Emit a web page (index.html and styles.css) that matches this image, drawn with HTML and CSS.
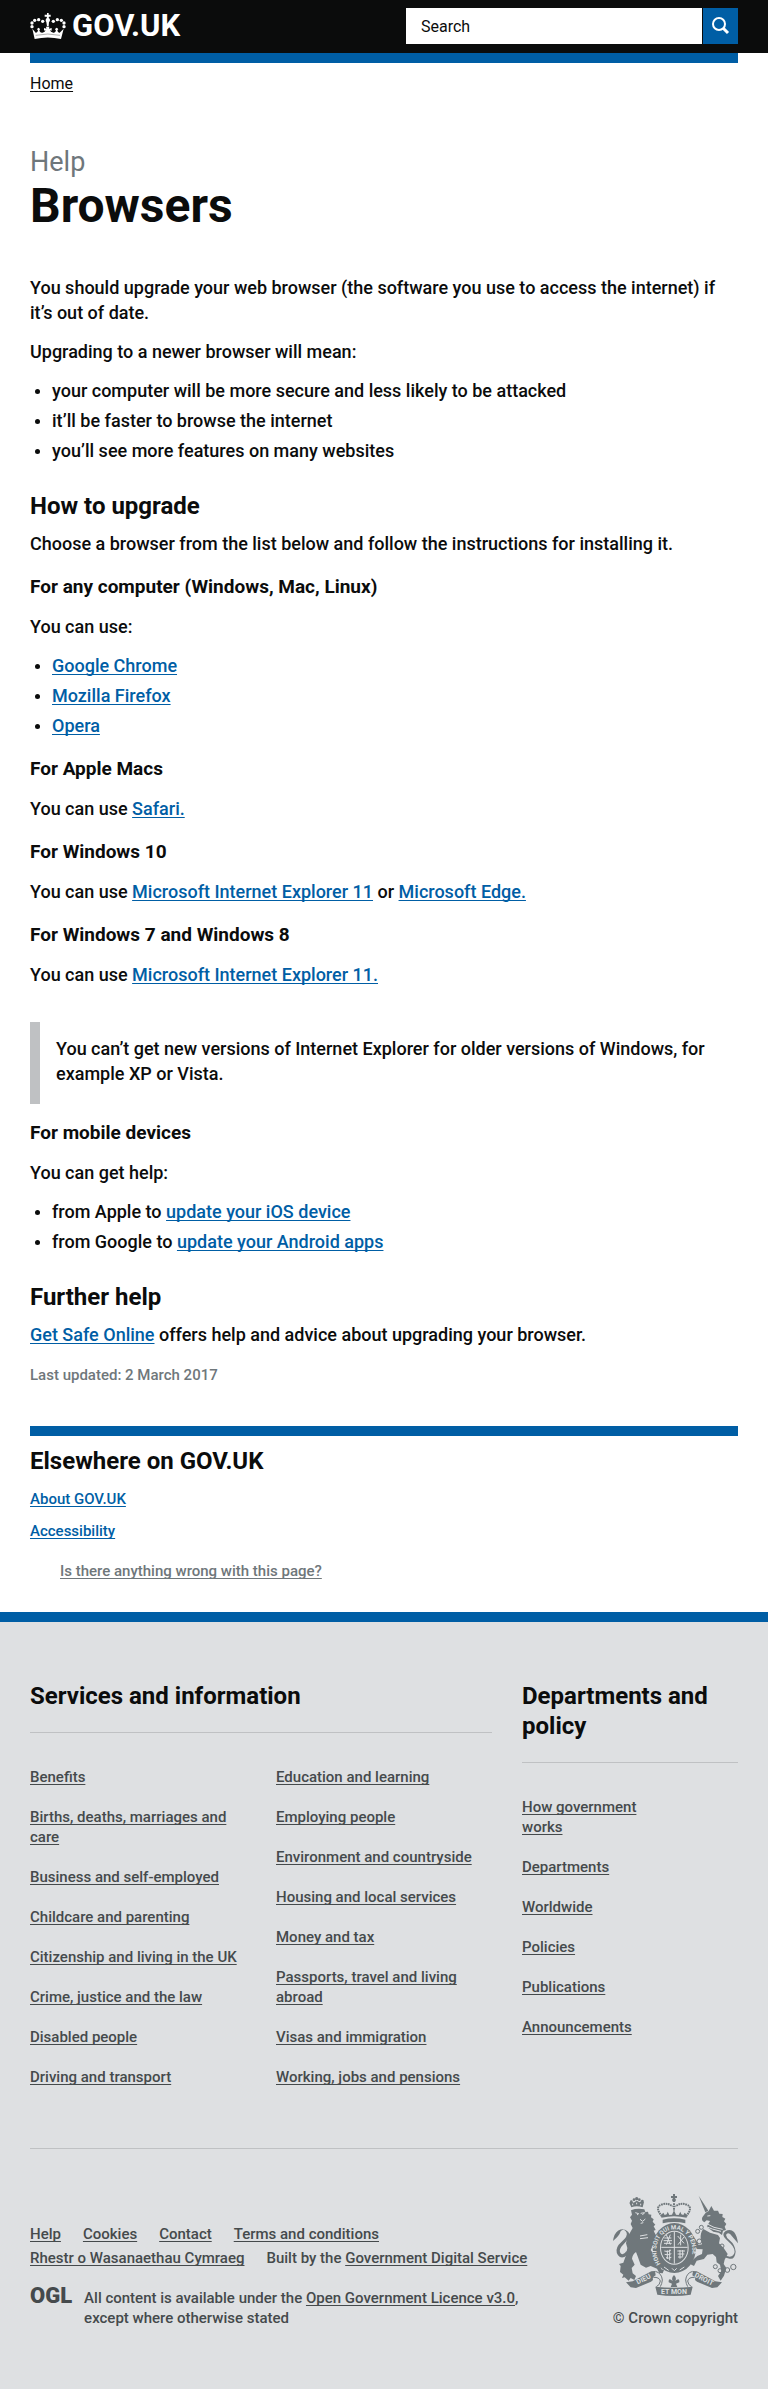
FILE: index.html
```html
<!DOCTYPE html>
<html lang="en">
<head>
<meta charset="utf-8">
<meta name="viewport" content="width=device-width, initial-scale=1">
<title>Browsers - Help - GOV.UK</title>
<link rel="stylesheet" href="styles.css">
</head>
<body>
<header class="site-header">
  <div class="container site-header-inner">
    <a class="logo" href="#">
      <svg class="crown" viewBox="32 36 106 78" aria-hidden="true">
        <path d="M38 83 L48 95 Q54 96 55 88 L52 85 Q57 76 61 85 L59 89 Q62 96 68 95 Q77 94 77 87 L73 89 V81 L80 83 L79 77 H89 L88 83 L96 81 V89 L91 87 Q92 94 101 95 Q106 96 109 89 L106 85 Q111 76 116 85 L113 88 Q114 96 120 95 L132 83 L124 114 Q84 105 45 114 Z"/>
        <path d="M82 36 H87 V41 H93 V47 H88 L87 51 Q91 52 91 57 Q91 61 88 63 L87 76 H82 L80 63 Q78 61 78 57 Q78 52 82 51 L81 47 H75 V41 H82 Z"/>
        <circle cx="37" cy="77" r="5"/><circle cx="37" cy="66" r="5"/><circle cx="45" cy="58" r="5"/><circle cx="57" cy="56" r="5"/><circle cx="69" cy="61" r="5"/>
        <circle cx="133" cy="77" r="5"/><circle cx="133" cy="66" r="5"/><circle cx="125" cy="58" r="5"/><circle cx="113" cy="56" r="5"/><circle cx="101" cy="61" r="5"/>
        <path class="gap" d="M48 103 Q84 95 121 103"/>
      </svg>
      <span>GOV.UK</span>
    </a>
    <form class="search" role="search">
      <input type="search" id="site-search" aria-label="Search" placeholder="Search">
      <button type="submit" aria-label="Search GOV.UK">
        <svg viewBox="0 0 18 18" aria-hidden="true"><circle cx="7" cy="7" r="6"/><path d="M11 11 L16 16"/></svg>
      </button>
    </form>
  </div>
</header>
<div class="container">
  <nav class="breadcrumb" aria-label="Breadcrumb"><a href="#">Home</a></nav>
  <main>
    <header class="page-title">
      <p>Help</p>
      <h1>Browsers</h1>
    </header>
    <article class="content">
      <p>You should upgrade your web browser (the software you use to access the internet) if it’s out of date.</p>
      <p>Upgrading to a newer browser will mean:</p>
      <ul>
        <li>your computer will be more secure and less likely to be attacked</li>
        <li>it’ll be faster to browse the internet</li>
        <li>you’ll see more features on many websites</li>
      </ul>
      <h2>How to upgrade</h2>
      <p>Choose a browser from the list below and follow the instructions for installing it.</p>
      <h3>For any computer (Windows, Mac, Linux)</h3>
      <p>You can use:</p>
      <ul>
        <li><a href="#">Google Chrome</a></li>
        <li><a href="#">Mozilla Firefox</a></li>
        <li><a href="#">Opera</a></li>
      </ul>
      <h3>For Apple Macs</h3>
      <p>You can use <a href="#">Safari.</a></p>
      <h3>For Windows 10</h3>
      <p>You can use <a href="#">Microsoft Internet Explorer 11</a> or <a href="#">Microsoft Edge.</a></p>
      <h3>For Windows 7 and Windows 8</h3>
      <p>You can use <a href="#">Microsoft Internet Explorer 11.</a></p>
      <div class="callout"><p>You can’t get new versions of Internet Explorer for older versions of Windows, for example XP or Vista.</p></div>
      <h3>For mobile devices</h3>
      <p>You can get help:</p>
      <ul>
        <li>from Apple to <a href="#">update your iOS device</a></li>
        <li>from Google to <a href="#">update your Android apps</a></li>
      </ul>
      <h2>Further help</h2>
      <p><a href="#">Get Safe Online</a> offers help and advice about upgrading your browser.</p>
      <p class="updated">Last updated: 2 March 2017</p>
    </article>
  </main>
  <aside class="related">
    <h2>Elsewhere on GOV.UK</h2>
    <ul>
      <li><a href="#">About GOV.UK</a></li>
      <li><a href="#">Accessibility</a></li>
    </ul>
  </aside>
  <p class="report"><a href="#">Is there anything wrong with this page?</a></p>
</div>
<footer class="site-footer">
  <div class="container">
    <div class="footer-nav">
      <section>
        <h2>Services and information</h2>
        <ul class="two-columns">
          <li><a href="#">Benefits</a></li>
          <li><a href="#">Births, deaths, marriages and care</a></li>
          <li><a href="#">Business and self-employed</a></li>
          <li><a href="#">Childcare and parenting</a></li>
          <li><a href="#">Citizenship and living in the UK</a></li>
          <li><a href="#">Crime, justice and the law</a></li>
          <li><a href="#">Disabled people</a></li>
          <li><a href="#">Driving and transport</a></li>
          <li><a href="#">Education and learning</a></li>
          <li><a href="#">Employing people</a></li>
          <li><a href="#">Environment and countryside</a></li>
          <li><a href="#">Housing and local services</a></li>
          <li><a href="#">Money and tax</a></li>
          <li><a href="#">Passports, travel and living abroad</a></li>
          <li><a href="#">Visas and immigration</a></li>
          <li><a href="#">Working, jobs and pensions</a></li>
        </ul>
      </section>
      <section>
        <h2>Departments and policy</h2>
        <ul class="narrow">
          <li><a href="#">How government works</a></li>
          <li><a href="#">Departments</a></li>
          <li><a href="#">Worldwide</a></li>
          <li><a href="#">Policies</a></li>
          <li><a href="#">Publications</a></li>
          <li><a href="#">Announcements</a></li>
        </ul>
      </section>
    </div>
    <div class="footer-meta">
      <div class="meta-text">
        <ul class="meta-links">
          <li><a href="#">Help</a></li>
          <li><a href="#">Cookies</a></li>
          <li><a href="#">Contact</a></li>
          <li><a href="#">Terms and conditions</a></li>
          <li><a href="#">Rhestr o Wasanaethau Cymraeg</a></li>
          <li>Built by the <a href="#">Government Digital Service</a></li>
        </ul>
        <div class="licence">
          <span class="ogl">OGL</span>
          <p>All content is available under the <a href="#">Open Government Licence v3.0</a>, except where otherwise stated</p>
        </div>
      </div>
      <a class="copyright" href="#">
        <svg class="arms" viewBox="39 42 375 306" aria-hidden="true">
          <!-- lion -->
          <path d="M93 91 Q110 84 133 88 L136 96 L144 95 L146 103 L154 104 L153 112 L161 118 L158 125 L166 134 L161 139 L167 150 L161 152 L166 163 L174 170 L170 177 L179 179 L176 186 L184 190 L180 198 L170 194 L168 204 L158 198 L152 210 L164 226 L165 240 L178 246 L184 268 L192 270 L188 280 L178 279 L171 266 L152 258 L138 263 L122 254 L114 232 L108 216 Q98 222 96 236 L104 254 L95 264 L98 280 L108 288 L103 300 L92 294 L86 302 L74 292 L66 294 L70 284 L60 276 L62 258 L57 252 L70 248 L78 226 L82 204 L78 190 L82 172 L90 158 L98 144 L92 132 L96 122 L90 112 L96 104 Z"/>
          <path d="M82 224 Q66 240 54 226 Q44 210 56 194 L74 176 Q86 162 76 152 Q68 146 62 154 Q58 168 39 183 Q42 160 54 152 Q72 142 85 156 Q94 168 80 182 L64 200 Q56 212 62 220 Q70 228 80 212 Z"/>
          <path d="M94 82 L88 68 Q94 62 101 68 L110 62 L119 67 Q127 60 132 66 L128 82 Q110 76 94 82 Z"/>
          <circle cx="94" cy="65" r="4"/><circle cx="102" cy="59" r="4"/><circle cx="110" cy="56" r="5"/><circle cx="118" cy="59" r="4"/><circle cx="127" cy="63" r="4"/>
          <path class="cut" d="M106 98 L116 101 L111 105 M122 100 L134 98 L127 105 M120 118 L128 124 L136 117 M122 130 L130 128 M98 71 V76 M110 68 V73 M122 71 V76 M120 168 L142 164 M120 176 L144 173"/>
          <!-- unicorn -->
          <path d="M296 47 L325 92 L316 97 Z"/>
          <path d="M307 112 L317 98 L326 93 L334 78 L342 92 L354 92 L358 101 L368 102 L367 111 L376 116 L372 124 L379 132 L374 140 L378 150 L369 152 L366 165 L356 158 L340 155 L320 140 L330 123 L320 121 L313 127 Q303 122 307 112 Z"/>
          <path d="M310 147 L330 158 L354 165 L360 174 L357 190 L371 204 L383 222 L374 239 L371 252 L379 264 L372 287 L362 302 L354 288 L364 274 L360 254 L350 247 L348 231 L338 222 L322 224 L312 237 L290 242 L282 258 L270 252 L278 240 L292 228 L306 222 L308 208 L289 207 L280 193 L276 181 L270 172 L280 168 L288 180 L296 195 L306 193 L302 178 Q300 158 310 147 Z"/>
          <path d="M372 222 Q392 239 402 222 Q408 207 392 191 L378 178 Q363 164 376 154 Q391 145 402 156 Q411 167 414 190 Q400 174 391 163 Q382 156 378 165 Q379 173 389 181 Q405 194 407 215 Q404 240 389 236 Q378 234 368 228 Z"/>
          <path class="cut" d="M322 108 L331 107 M316 139 L337 147 L363 154 M322 132 L342 142 L368 148"/>
          <g class="line"><circle cx="346" cy="260" r="6"/><circle cx="360" cy="272" r="6"/><circle cx="382" cy="270" r="7"/><circle cx="400" cy="261" r="8"/><circle cx="366" cy="198" r="6"/><circle cx="298" cy="184" r="7"/><circle cx="293" cy="154" r="6"/><circle cx="304" cy="142" r="6"/></g>
          <!-- crown -->
          <path d="M219 42 H225 V48 H231 V54 H225 L228 60 L225 66 H219 L216 60 L219 54 H213 V48 H219 Z"/>
          <path d="M184 104 L190 98 L194 105 L200 103 L203 95 L208 105 L216 104 L222 91 L228 104 L236 105 L241 95 L244 103 L250 105 L254 98 L260 104 V113 Q222 104 184 113 Z"/>
          <path d="M188 119 Q222 111 256 119 V130 Q222 122 188 130 Z"/>
          <g class="beads"><path d="M186 109 Q163 82 184 74 Q202 67 218 79 M258 109 Q281 82 260 74 Q242 67 226 79 M222 70 V92"/></g>
          <!-- garter and shield -->
          <ellipse cx="223" cy="204" rx="65" ry="75"/>
          <ellipse class="ground" cx="223" cy="203" rx="43" ry="51"/>
          <ellipse cx="223" cy="203" rx="40" ry="48"/>
          <path class="cut" d="M223 155 V251 M184 202 H263"/>
          <path class="cut" d="M193 174 H214 M191 182 H216 M192 190 H215 M199 164 L211 194 M211 164 L199 194 M233 168 L252 190 M252 171 L234 194 M242 164 V196 M193 213 Q204 218 213 210 M194 223 Q204 227 214 221 M198 233 Q206 236 214 232 M202 211 V237 M209 209 V241 M232 213 H255 M233 222 H253 M234 231 H248 M240 210 V236 M248 210 V230"/>
          <path id="garter" class="hidden" d="M187 258 A54 63 0 1 1 259 258"/>
          <text class="motto"><textPath href="#garter" startOffset="8">HONI SOIT QUI MAL Y PENSE</textPath></text>
          <path class="cut" d="M192 261 L206 271 M216 265 L223 272 L230 265 M239 270 L253 261"/>
          <!-- scroll -->
          <path d="M78 307 L98 304 L154 274 L165 273 L167 286 Q156 291 159 300 L153 305 L108 324 L92 322 Z"/>
          <path d="M366 307 L346 304 L290 274 L279 273 L277 286 Q288 291 285 300 L291 305 L336 324 L352 322 Z"/>
          <path d="M166 320 Q222 326 278 320 L272 344 Q222 352 172 344 Z"/>
          <path class="line" d="M160 292 Q178 291 181 303 Q180 315 169 320 M284 292 Q266 291 263 303 Q264 315 275 320 M166 274 Q185 279 187 300 Q186 311 181 320 M278 274 Q259 279 257 300 Q258 311 263 320"/>
          <path d="M222 285 Q231 294 226 303 Q239 291 238 307 L228 311 L232 321 H212 L216 311 L206 307 Q205 291 218 303 Q213 294 222 285 Z"/>
          <text class="scroll" x="132" y="304" transform="rotate(-27 132 300)">DIEU</text>
          <text class="scroll" x="222" y="342">ET MON</text>
          <text class="scroll" x="311" y="304" transform="rotate(27 311 300)">DROIT</text>
        </svg>
        <span>© Crown copyright</span>
      </a>
    </div>
  </div>
</footer>
</body>
</html>
```
FILE: styles.css
```css
* { box-sizing: border-box; }
body, h1, h2, h3, p, ul { margin: 0; padding: 0; }
body {
  background: #fff;
  color: #0b0c0c;
  font-family: Roboto, "Liberation Sans", sans-serif;
  font-size: 18px;
  font-weight: 500;
  line-height: 25px;
}
a { color: #005ea5; text-underline-offset: 2px; text-decoration-skip-ink: none; }
h1, h2, h3 { font-weight: 700; }
h2 { font-size: 24px; line-height: 30px; }
h3 { font-size: 19px; line-height: 25px; }
.container { max-width: 1020px; margin: 0 auto; padding: 0 30px; }

.site-header { background: #0b0c0c; }
.site-header-inner { display: flex; align-items: center; justify-content: space-between; padding-top: 8px; padding-bottom: 9px; }
.logo { display: flex; align-items: center; gap: 6px; color: #fff; font-size: 31px; line-height: 36px; font-weight: 700; text-decoration: none; }
.crown { width: 36px; height: 26px; fill: #fff; }
.crown .gap { fill: none; stroke: #0b0c0c; stroke-width: 1; }
.search { display: flex; gap: 1px; width: 332px; }
.search input { flex: 1; min-width: 0; height: 36px; padding: 0 15px; border: 0; border-radius: 0; background: #fff; color: #0b0c0c; font: 400 16px/20px Roboto, sans-serif; appearance: none; }
.search input::placeholder { color: #0b0c0c; opacity: 1; }
.search button { width: 35px; height: 36px; padding: 0; border: 0; background: #005ea5; display: grid; place-items: center; }
.search svg { width: 18px; height: 18px; fill: none; stroke: #fff; stroke-width: 2; }
.search path { stroke-width: 3; }

.breadcrumb { border-top: 10px solid #005ea5; padding: 11px 0; font-size: 16px; font-weight: 400; line-height: 20px; }
.breadcrumb a { color: #0b0c0c; }
.page-title { padding: 42px 0 44px; }
.page-title p { color: #6f777b; font-size: 27px; font-weight: 400; line-height: 30px; }
.page-title h1 { font-size: 48px; line-height: 50px; margin-top: 4px; }

.content p { margin-bottom: 14px; }
.content ul { padding-left: 22px; margin-bottom: 14px; }
.content li { margin-bottom: 5px; }
.content li::marker { font-size: 16px; }
.content h2 { margin: 28px 0 10px; }
.content h3 { margin: 18px 0 15px; }
.content .callout { border-left: 10px solid #bfc1c3; padding: 14px 15px 18px 16px; margin: 35px 0 0; }
.content .callout p { margin: 0; }
.content .callout + h3 { margin-top: 16px; }
.content .updated { color: #6f777b; font-size: 15px; line-height: 20px; margin: 18px 0 0; }

.related { border-top: 10px solid #005ea5; margin-top: 41px; padding-top: 10px; font-size: 15px; line-height: 20px; }
.related ul { list-style: none; margin-top: 13px; }
.related li { margin-bottom: 12px; }
.report { padding: 8px 30px 31px; font-size: 15px; line-height: 20px; }
.report a { color: #6f777b; }

.site-footer { background: #dee0e2; border-top: 10px solid #005ea5; padding: 59px 0 61px; color: #454a4c; font-size: 15px; line-height: 20px; }
.site-footer a { color: #454a4c; }
.site-footer ul { list-style: none; }
.footer-nav { display: grid; grid-template-columns: 462fr 216fr; gap: 30px; align-items: start; padding-bottom: 41px; border-bottom: 1px solid #bfc1c3; }
.footer-nav h2 { color: #0b0c0c; padding-bottom: 21px; margin-bottom: 34px; border-bottom: 1px solid #bfc1c3; }
.footer-nav li { padding-bottom: 20px; break-inside: avoid; }
.two-columns { columns: 2; column-gap: 30px; }
.narrow { padding-right: 80px; }
.footer-meta { display: flex; justify-content: space-between; align-items: flex-end; padding-top: 45px; }
.meta-text { width: 524px; }
.meta-links { display: flex; flex-wrap: wrap; gap: 4px 22px; margin-bottom: 20px; }
.licence { display: flex; gap: 12px; padding-right: 20px; }
.ogl { font-size: 22px; line-height: 16px; font-weight: 900; }
.site-footer .copyright { display: flex; flex-direction: column; align-items: flex-end; gap: 12px; text-decoration: none; }
.arms { width: 125px; height: 102px; fill: #6f777b; }
.arms .cut { fill: none; stroke: #dee0e2; stroke-width: 3; }
.arms .line { fill: none; stroke: #6f777b; stroke-width: 3; }
.arms .beads { fill: none; stroke: #6f777b; stroke-width: 6; stroke-dasharray: 5 2; }
.arms .ground { fill: #dee0e2; }
.arms .hidden { fill: none; }
.arms text { fill: #dee0e2; font-weight: 700; }
.arms .motto { font-size: 18px; }
.arms .scroll { font-size: 21px; text-anchor: middle; }
```
